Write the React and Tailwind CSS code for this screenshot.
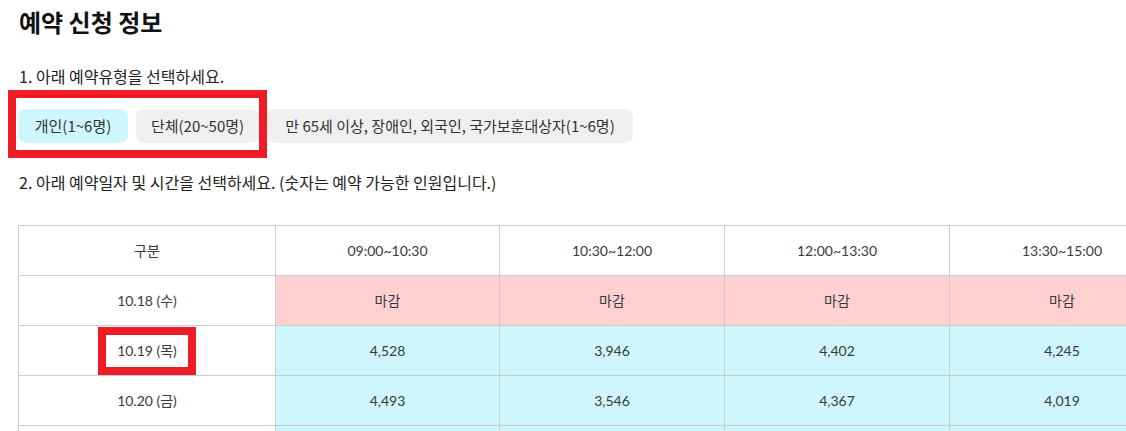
import React from "react";

const slots = ["09:00~10:30", "10:30~12:00", "12:00~13:30", "13:30~15:00", "15:00~16:30"];

const rows = [
  { date: "10.18 (수)", values: ["마감", "마감", "마감", "마감", "마감"], closed: true },
  { date: "10.19 (목)", values: ["4,528", "3,946", "4,402", "4,245", "4,310"] },
  { date: "10.20 (금)", values: ["4,493", "3,546", "4,367", "4,019", "4,122"] },
  { date: "10.21 (토)", values: ["4,210", "3,877", "4,105", "3,990", "4,061"] },
];

const types = [
  { label: "개인(1~6명)", width: "w-[110px]", active: true },
  { label: "단체(20~50명)", width: "w-[123px]" },
  { label: "만 65세 이상, 장애인, 외국인, 국가보훈대상자(1~6명)", width: "w-[366px]" },
];

const App = () => {
  return (
    <div className="relative w-[1126px] h-[431px] overflow-hidden bg-white font-['Noto_Sans_CJK_KR',sans-serif] text-[#222]">
      <div className="pl-[19px] pt-[5px]">
        <h1 className="text-[24px] font-bold leading-[34px] text-[#111]">예약 신청 정보</h1>

        <p className="mt-[26px] text-[16px] leading-[22px]">1. 아래 예약유형을 선택하세요.</p>
        <div className="mt-[22px] -ml-px flex gap-[8px]">
          {types.map((t, i) => (
            <button
              key={i}
              className={
                "h-[34px] rounded-[8px] text-[15px] text-[#333] whitespace-nowrap " +
                t.width +
                (t.active ? " bg-[#cff6fc]" : " bg-[#f0f0f0]")
              }
            >
              {t.label}
            </button>
          ))}
        </div>

        <p className="mt-[28px] text-[16px] leading-[22px]">
          2. 아래 예약일자 및 시간을 선택하세요. (숫자는 예약 가능한 인원입니다.)
        </p>
      </div>

      <table className="ml-[18px] mt-[32px] w-[1382px] table-fixed border-collapse font-['Lato','Noto_Sans_CJK_KR',sans-serif] text-[14px] text-[#3a3a3a]">
        <colgroup>
          <col className="w-[257px]" />
          <col className="w-[224px]" />
          <col className="w-[225px]" />
          <col className="w-[225px]" />
          <col className="w-[225px]" />
          <col className="w-[225px]" />
        </colgroup>
        <thead>
          <tr className="h-[50px]">
            <th className="border border-[#cccccc] font-normal">구분</th>
            {slots.map((s) => (
              <th key={s} className="border border-[#cccccc] font-normal">
                {s}
              </th>
            ))}
          </tr>
        </thead>
        <tbody>
          {rows.map((r) => (
            <tr key={r.date} className="h-[50px]">
              <td className="border border-[#cccccc] text-center">{r.date}</td>
              {r.values.map((v, i) => (
                <td
                  key={i}
                  className={
                    "border border-[#cccccc] text-center " +
                    (r.closed ? "bg-[#ffd0d0]" : "bg-[#cff6fc]")
                  }
                >
                  {v}
                </td>
              ))}
            </tr>
          ))}
        </tbody>
      </table>

      {/* annotation boxes */}
      <div className="absolute left-[8px] top-[90px] w-[259px] h-[68px] border-[8px] border-[#ee1c25]"></div>
      <div className="absolute left-[98px] top-[327px] w-[98px] h-[48px] border-[8px] border-[#ee1c25]"></div>
    </div>
  );
};

export default App;
